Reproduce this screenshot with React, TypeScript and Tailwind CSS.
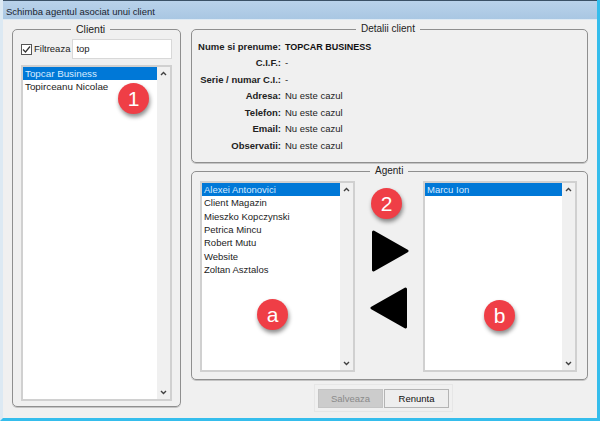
import type { ReactNode } from "react";

const details = [
  ["Nume si prenume:", "TOPCAR BUSINESS"],
  ["C.I.F.:", "-"],
  ["Serie / numar C.I.:", "-"],
  ["Adresa:", "Nu este cazul"],
  ["Telefon:", "Nu este cazul"],
  ["Email:", "Nu este cazul"],
  ["Observatii:", "Nu este cazul"],
];
const agents = ["Alexei Antonovici", "Client Magazin", "Mieszko Kopczynski", "Petrica Mincu", "Robert Mutu", "Website", "Zoltan Asztalos"];

function Group({ title, className, legend, children }: { title: string; className: string; legend: string; children: ReactNode }) {
  return (
    <div className={`relative border border-[#8f8f8f] rounded-[5px] shadow-[0_1px_0_#c4c4c4] ${className}`}>
      <span className={`absolute top-[-8px] bg-[#f0f0f0] px-[5px] leading-[14px] text-[#222] ${legend}`}>{title}</span>
      {children}
    </div>
  );
}

function ListBox({ items, className }: { items: string[]; className: string }) {
  return (
    <div className={`flex bg-white border-2 border-[#d0d0d0] ${className}`}>
      <div className="flex-1">
        {items.map((t, i) => (
          <div key={t} className={`h-[13.33px] pl-[2px] leading-[13px] ${i === 0 ? "bg-[#0078d7] text-[#d7ebff]" : "text-[#1c1c1c]"}`}>{t}</div>
        ))}
      </div>
      <div className="w-[13px] bg-[#f0f0f0] flex flex-col justify-between items-center py-[4px]">
        <svg width="7" height="5" viewBox="0 0 7 5" fill="none" stroke="#404040" strokeWidth="1.4"><path d="M1 4l2.5-2.5L6 4" /></svg>
        <svg width="7" height="5" viewBox="0 0 7 5" fill="none" stroke="#404040" strokeWidth="1.4"><path d="M1 1l2.5 2.5L6 1" /></svg>
      </div>
    </div>
  );
}

function Badge({ label, className }: { label: string; className: string }) {
  return (
    <div className={`absolute w-[31px] h-[31px] rounded-full bg-[#ef3e46] text-white flex items-center justify-center text-[21px] leading-none shadow-[1px_3px_4px_rgba(0,0,0,0.45)] ${className}`}>
      {label}
    </div>
  );
}

export default function App() {
  return (
    <div className="relative w-[600px] h-[421px] overflow-hidden bg-[#f0f0f0] text-[10px] font-['Liberation_Sans',Arial,sans-serif] border-l-[3px] border-l-[#dce9f3] border-r-[3px] border-r-[#35bdec] border-b-[3px] border-b-[#35bdec]">
      <div className="h-[20px] -ml-[3px] -mr-[3px] pl-[6px] border-t border-t-[#3b5166] border-b border-b-[#dde9f3] bg-gradient-to-b from-[#b9d2ea] to-[#a9c7e3] text-[9.5px] leading-[22px] text-[#1a2430]">Schimba agentul asociat unui client</div>

      <div className="flex gap-[10px] pl-[9px] pt-[9px]">
        <Group title="Clienti" className="w-[169px] h-[378px] pt-[9px] px-[8px] shrink-0" legend="left-[58px] text-[10.5px]">
          <div className="flex items-center h-[20px] gap-[2px]">
            <span className="w-[11px] h-[11px] border border-[#555] bg-white flex items-center justify-center">
              <svg width="9" height="9" viewBox="0 0 9 9" fill="none" stroke="#333" strokeWidth="1.2"><path d="M1 4.5L3.5 7 8 1.5" /></svg>
            </span>
            <span className="text-[9.5px] text-[#222]">Filtreaza</span>
            <div className="ml-auto w-[101px] h-[20px] bg-white border border-[#d8d8d8] pl-[3px] text-[9.5px] leading-[18px] text-[#222]">top</div>
          </div>
          <ListBox items={["Topcar Business", "Topirceanu Nicolae"]} className="mt-[6px] h-[336px] text-[9.8px]" />
          <Badge label="1" className="left-[105px] top-[53px]" />
        </Group>

        <div className="w-[397px] flex flex-col gap-[8px]">
          <Group title="Detalii client" className="h-[134px] pt-[8.5px]" legend="left-[164px] text-[10px]">
            <div className="grid grid-cols-[89px_1fr] gap-x-[4px] text-[9.5px] leading-[16.5px] text-[#222]">
              {details.map(([k, v], i) => (
                <div key={k} className="contents">
                  <div className="text-right font-bold whitespace-nowrap">{k}</div>
                  <div className={i === 0 ? "font-bold text-[9px] text-[#111]" : ""}>{v}</div>
                </div>
              ))}
            </div>
          </Group>

          <Group title="Agenti" className="h-[209px] flex pt-[9px] pl-[8px]" legend="left-[178px] text-[10px]">
            <ListBox items={agents} className="w-[155px] h-[191px] text-[9.5px]" />
            <div className="w-[68px] flex flex-col items-center pt-[49px] gap-[15px] shrink-0">
              <svg width="38" height="42" viewBox="0 0 38 42" className="ml-[1px]"><path d="M2.5 2L36 21 2.5 40z" fill="#000" stroke="#000" strokeWidth="3" strokeLinejoin="round" /></svg>
              <svg width="38" height="42" viewBox="0 0 38 42"><path d="M35.5 2L2 21l33.5 19z" fill="#000" stroke="#000" strokeWidth="3" strokeLinejoin="round" /></svg>
            </div>
            <ListBox items={["Marcu Ion"]} className="w-[154px] h-[191px] text-[9.5px]" />
            <Badge label="2" className="left-[179px] top-[16px]" />
            <Badge label="a" className="left-[65px] top-[127px]" />
            <Badge label="b" className="left-[292px] top-[128px]" />
          </Group>

          <div className="self-start ml-[123px] flex gap-px border border-[#e6e6e6] px-[3px] pt-[4px] pb-[3px] -mt-[4px]">
            <div className="w-[65px] h-[19px] bg-[#cccccc] border border-[#c4c4c4] text-center text-[9.5px] leading-[17px] text-[#8a8a8a]">Salveaza</div>
            <div className="w-[65px] h-[19px] bg-[#eeeeee] border border-[#b4b4b4] text-center text-[9.5px] leading-[17px] text-[#111]">Renunta</div>
          </div>
        </div>
      </div>
    </div>
  );
}
